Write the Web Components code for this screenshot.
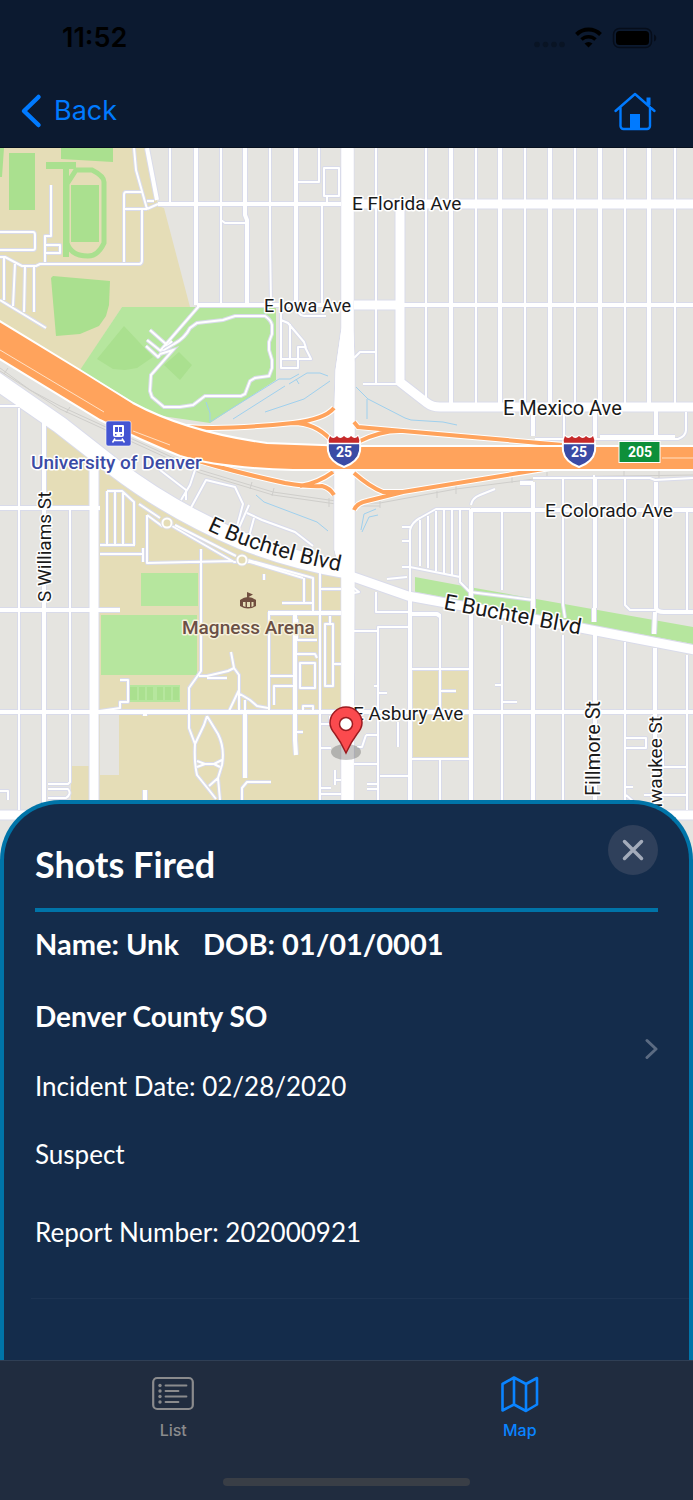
<!DOCTYPE html>
<html lang="en">
<head>
<meta charset="utf-8">
<meta name="viewport" content="width=device-width, initial-scale=1">
<title>Shots Fired</title>
<style>
  body {
    margin: 0;
    font-family: Lato, "Open Sans", sans-serif;
    background: #0c1a30;
  }
</style>
</head>
<body>
<mobile-screen>
  <status-bar slot="top" time="11:52"></status-bar>
  <nav-bar slot="top">Back</nav-bar>
  <street-map slot="map"></street-map>
  <incident-sheet>
    <span slot="title">Shots Fired</span>
    <incident-record>
      <span slot="name">Name: Unk</span>
      <span slot="dob">DOB: 01/01/0001</span>
      <span slot="agency">Denver County SO</span>
      <span slot="date">Incident Date: 02/28/2020</span>
      <span slot="role">Suspect</span>
      <span slot="report">Report Number: 202000921</span>
    </incident-record>
  </incident-sheet>
  <tab-bar slot="tabs">
    <tab-item href="#list">
      <svg slot="icon" width="42" height="38" viewBox="0 0 42 38" fill="none" stroke="currentColor" stroke-width="2.2">
        <rect x="1.2" y="3" width="39.6" height="31" rx="4"/>
        <path d="M13.5 10.5h21M13.5 16h13M13.5 21.5h21M13.5 27h13" stroke-linecap="round" stroke-width="1.8"/>
        <g fill="currentColor" stroke="none"><circle cx="8" cy="10.5" r="1.7"/><circle cx="8" cy="16" r="1.7"/><circle cx="8" cy="21.5" r="1.7"/><circle cx="8" cy="27" r="1.7"/></g>
      </svg>
      List
    </tab-item>
    <tab-item href="#map" active>
      <svg slot="icon" width="38" height="38" viewBox="0 0 38 38" fill="none" stroke="currentColor" stroke-width="2.6" stroke-linejoin="round">
        <path d="M1.500 9L13 2.500L25 9L36 3V29.500L25 36L13 29.500L1.500 35.500ZM13 2.500V29.500M25 9V36"/>
      </svg>
      Map
    </tab-item>
  </tab-bar>
</mobile-screen>

<script>
class MobileScreen extends HTMLElement {
  constructor() {
    super();
    this.attachShadow({ mode: 'open' });
    this.shadowRoot.innerHTML = `
      <style>
        :host {
          display: flex;
          flex-direction: column;
          min-height: 100vh;
        }
        header {
          background: #0c1a30;
          border-bottom: 1px solid #07101f;
        }
        main {
          flex: 1;
          display: flex;
          flex-direction: column;
        }
        ::slotted(incident-sheet) {
          flex: 1;
          margin-top: -60px;
          position: relative;
        }
      </style>
      <header><slot name="top"></slot></header>
      <main><slot name="map"></slot><slot></slot></main>
      <slot name="tabs"></slot>
    `;
  }
}

class StatusBar extends HTMLElement {
  constructor() {
    super();
    this.attachShadow({ mode: 'open' });
    this.shadowRoot.innerHTML = `
      <style>
        :host {
          display: flex;
          align-items: center;
          justify-content: space-between;
          height: 75px;
          padding: 0 36px 0 62px;
          color: #000;
          font: 600 27px/32px Inter, sans-serif;
        }
        svg { display: block; }
      </style>
      <time>${this.getAttribute('time')}</time>
      <svg width="124" height="26" viewBox="0 0 124 26" role="img" aria-label="Wi-Fi on, battery full">
        <g fill="#091424"><circle cx="4" cy="19.500" r="2.800"/><circle cx="12.500" cy="19.500" r="2.800"/><circle cx="21" cy="19.500" r="2.800"/><circle cx="29" cy="19.500" r="2.800"/></g>
        <g fill="none" stroke="#000" stroke-width="4">
          <path d="M43.500 9.500a17 17 0 0 1 24 0"/>
          <path d="M48.500 14.500a10 10 0 0 1 14 0" stroke-width="3.500"/>
        </g>
        <path d="M55.500 22.500l-4-4a6 6 0 0 1 8 0z"/>
        <rect x="80.500" y="3.500" width="38" height="19" rx="6" fill="none" stroke="#060d1a" stroke-width="1.500"/>
        <rect x="83" y="6" width="33" height="14" rx="3.500"/>
        <path d="M121 9.500c3 1 3 6 0 7z" fill="#060d1a"/>
      </svg>
    `;
  }
}

class NavBar extends HTMLElement {
  constructor() {
    super();
    this.attachShadow({ mode: 'open' });
    this.shadowRoot.innerHTML = `
      <style>
        :host {
          display: flex;
          align-items: center;
          justify-content: space-between;
          height: 72px;
          padding: 0 36px 0 20px;
          color: #007aff;
        }
        button {
          display: flex;
          align-items: center;
          gap: 12px;
          padding: 0;
          border: 0;
          background: none;
          color: inherit;
          font: 400 27px/36px Inter, sans-serif;
          cursor: pointer;
        }
        svg { display: block; }
      </style>
      <button>
        <svg width="22" height="36" viewBox="0 0 22 36" fill="none" stroke="currentColor" stroke-width="4.500" stroke-linecap="round" stroke-linejoin="round"><path d="M18.500 4L4 18L18.500 32"/></svg>
        <slot></slot>
      </button>
      <button aria-label="Home">
        <svg width="44" height="40" viewBox="0 0 44 40" fill="none" stroke="currentColor" stroke-width="2.400" stroke-linecap="round" stroke-linejoin="round">
          <path d="M2.500 20L22 3L41.500 20M7.500 16V35a3 3 0 0 0 3 3H34a3 3 0 0 0 3-3V16"/>
          <path d="M35.500 6.500V14" stroke-width="4" stroke-linecap="butt"/>
          <path d="M17 23H27V38H17Z" fill="currentColor" stroke="none"/>
        </svg>
      </button>
    `;
  }
}

// Roads by class. Each one is drawn twice: casing first, then white on top.
const roads = {
  alley: [
    'M170 148V204M221 148V304M270 148V240L271 304M319 148V182H297M322 205V304M324 168H339V196H324ZM327 196V204',
    'M221 220L225 223H245M134 148L136 170L147 209M123 209H147M158 204L147 209M147 201H154M143 192H126Q124 192 124 195V262M142 209V260Q142 264 139 264H40L36 266H22L5 257H0',
    'M51 185V236H45V262M45 245H60V253H45M0 232H33Q35 232 35 235V248Q35 250 33 250H0M4 258V300M15 264L13 306M25 266L24 312M34 266V312M0 300L46 328',
    'M150 330L167 345M147 340L162 352M146 346L158 357L172 341M281 311V368H298V347H305L311 359H281M281 320L288 323L304 342L306 348M290 324V358M296 305Q298 316 304 316H326M199 306L160 351',
    'M376 148V384M426 148V398M476 148V407M525 148V407M575 148V407M625 148V407M675 148V407M363 384H398M354 358L360 352H375',
    'M564 412V438M686 412V430Q686 436 678 439H535M19 408V810M0 406H20M70 510V782L68 784H48M48 789H68Q72 794 66 798H48',
    'M107 491V545M107 491H122L134 502V545M115 492V545M123 493V545M100 545H135M100 554H143M143 548V562M147 515V563L233 561M147 515L162 526H172L234 562H250L303 578',
    'M139 504L160 518M175 525L236 556M248 560L313 578V611M304 578V602M264 574V580M282 603H312M201 549V671L189 688V712M199 676H207L228 671L234 668L231 652M234 668L239 675V712M207 678H227M239 690L229 711',
    'M187 515L206 480L235 487L243 504L236 530M160 470L186 490V500M195 470L190 485L181 500M249 505L238 530M247 513L262 520L295 532L313 546M254 518L248 540',
    'M320 572V800M320 589H341M297 619V640H317M297 654H315L317 658M300 663H315V688H300ZM325 624H333V686H325ZM333 664H341M269 612V712M270 676H293M274 705V686H293M303 712V706H313V712M330 616V624',
    'M120 680H128V702H120V708L100 711M189 713V728L195 744Q194 762 197 775L209 790L216 799M207 716L204 725L195 744M207 716L218 734Q225 748 222 765L218 778L220 800M197 761L205 764H214L222 760M197 767L205 764M214 764L220 767M209 786L218 778M240 694L250 700L257 706L268 708M245 700V711M246 736H247M271 782H247L242 788V800M296 732H303M320 748H331M335 770V780H341M335 776V785M320 788H331M320 794H341M320 724H330V716',
    'M410 530V600M410 530Q412 522 420 518L436 509H470M420 520V566M428 516V568M436 511V571M444 509V573M452 509V576M460 509V577M402 527H410M402 541H410M402 567H410L460 577V582L470 592L533 600M471 505Q472 498 480 495L495 489M387 579L407 577',
    'M502 512V590M502 625V810M563 478V605L565 618M563 635V810M625 478V605L630 610H655M625 642V810M687 512V610M687 655V810M533 478H650L655 480L693 478M594 475V478',
    'M376 592V612H408M354 631H378M378 810V627H408M374 686H378M378 693H387M410 669H469M440 614V712M410 759H469M440 759V810M441 691H456M495 685H501M502 702H517M354 764H378M380 776H408M366 735L362 747H357M366 735H378M398 722V747M367 784H378M367 789H378M625 738H646V748H626M626 787H633M663 751V767H686M644 795H686M626 795L634 802',
    'M354 593L350 585L359 592ZM0 791H8V800'
  ],
  street: [
    'M158 204H341M197 305H345M403 305H693M147 148L157 200M196 148V305M245 148V215L247 220V305M296 148V305',
    'M451 148V407M500 148V407M550 148V407M600 148V407M649 148V407M533 410V436M595 410V438M656 410V439M675 437H600',
    'M44 420V810M0 508H75M75 508H100M0 610H120M0 712H693M268 613H341M295 613V740L296 755M245 713V778M145 712V716M145 790V800M94 508H100',
    'M471 509V810M471 510H693M533 482V810M520 483H533M595 478V608M594 608V622M595 635V810M656 482V608Q657 612 664 612H693M655 612L654 634M655 648V810M410 600V810M412 614H437L440 616'
  ],
  avenue: [
    'M354 204H693M354 305H400M400 204V382L427 403Q432 407 440 407H693M94 445V812M0 815H693',
    'M345 574L408 596L560 624L700 651'
  ],
  boulevard: [
    'M-5 380L60 425L115 468Q170 510 240 540Q290 560 347 570'
  ]
};
const widths = { alley: 2, street: 4, avenue: 9, boulevard: 17 };

const drawRoads = (extra, color) => Object.keys(roads).map(kind =>
  `<path d="${roads[kind].join('')}" stroke="${color}" stroke-width="${widths[kind] + extra}"/>`
).join('');

const ramps = 'M187 427Q225 430 293 423Q325 419 334 408M293 423Q315 423 330 439' +
  'M180 455Q225 470 285 483Q310 487 322 486Q330 488 334 495M300 486Q318 483 333 472' +
  'M354 422L358 427L403 431L563 445M360 441Q382 430 403 431M354 473Q370 487 383 492H403L556 467M354 510Q357 503 367 501L403 492';

const shield = x => `
  <g transform="translate(${x} 451)">
    <path d="M-14 -15Q-11 -12 -7 -15Q-4 -12 0 -15Q4 -12 7 -15Q11 -12 14 -15Q17 -10 16 0Q14 11 0 16Q-14 11 -16 0Q-17 -10 -14 -15Z" fill="#3b4ba5" stroke="#fff" stroke-width="2"/>
    <path d="M-14 -15Q-11 -11 -7 -15Q-4 -11 0 -15Q4 -11 7 -15Q11 -11 14 -15Q16 -11 15 -8H-15Q-16 -11 -14 -15Z" fill="#c62a2a"/>
    <path d="M-15 -7.500H15" stroke="#fff" stroke-width="1.500"/>
    <text class="sign" y="6">25</text>
  </g>`;

class StreetMap extends HTMLElement {
  constructor() {
    super();
    this.attachShadow({ mode: 'open' });
    this.shadowRoot.innerHTML = `
      <style>
        :host { display: block; }
        svg {
          display: block;
          width: 100%;
          aspect-ratio: 693 / 712;
        }
        text {
          font-family: Roboto, "Noto Sans", sans-serif;
          font-size: 19px;
          fill: #1a1a1a;
          stroke: #fff;
          stroke-width: 3px;
          stroke-linejoin: round;
          paint-order: stroke;
        }
        .small { font-size: 18px; }
        .large { font-size: 20px; }
        .arterial { font-size: 22px; }
        .station { font-weight: 500; fill: #3b4ba5; }
        .place { font-weight: 500; fill: #6b5045; stroke: #f6f1dc; }
        .sign {
          font-size: 14px;
          font-weight: 700;
          fill: #fff;
          stroke: none;
          text-anchor: middle;
        }
      </style>
      <svg viewBox="0 148 693 712" preserveAspectRatio="xMidYMid slice">
        <rect y="148" width="693" height="712" fill="#e5e4e0"/>

        <g fill="#e5ddb7">
          <path d="M0 148H147L158 206L164 208L190 307H122L80 371L0 322Z"/>
          <path d="M47 420L89 450V506H47ZM71 766H89V810H71Z"/>
          <path d="M98 465L341 577V712H319V810H98Z"/>
          <path d="M412 669H469V758H412Z"/>
        </g>
        <path d="M100 715H119V775H100Z" fill="#e5e4e0"/>
        <g fill="#b6e69e">
          <path d="M122 307H276V380L210 423L155 415L80 370Z"/>
          <path d="M141 573H198V606H141ZM101 615H197V675H101ZM129 685H180V702H129Z"/>
          <path d="M415 577L458 585L693 627V644L415 592Z"/>
        </g>
        <g fill="#aae08f">
          <path d="M0 148H4L2 177H0ZM9 153H35V210H9ZM61 148H113V162L61 159ZM46 162H76V169H46ZM63 165H69V257H63ZM71 185H99V242H71Z"/>
          <path d="M51 278L53 276L110 281L109 305L106 316L99 326L80 334L56 336Z"/>
          <path d="M124 326L153 357L137 368L125 370L113 369L97 359ZM179 352L192 365L180 380L164 365Z"/>
          <path d="M130 687h7v13h-7zM139 687h6v13h-6zM147 687h6v13h-6zM157 687h6v13h-6zM165 687h6v13h-6zM173 687h6v13h-6z"/>
        </g>
        <path d="M67 242V184L76 170H92Q104 176 104 182V243Q98 256 88 256Q71 256 67 243Z" fill="none" stroke="#aae08f" stroke-width="5"/>

        <g fill="none">
          <path d="M0 368L30 390L60 406L130 438L200 470L273 492L350 503L380 503L456 489L550 477L693 475M0 371L60 409L130 441L200 473L273 495L350 506L380 506" stroke="#cfcecb"/>
          <path d="M4 374L8 368M66 413L70 407M250 489L252 482M272 496L274 488M329 507V498M380 508V500M437 498V491M456 494V486M512 483V475M547 480V472M624 478V469M659 478V470" stroke="#cfcecb"/>
          <path d="M210 422L279 379H290L299 374M233 419L285 386M289 384L307 373H320L328 376M265 412L304 399L330 381M299 384L296 379M206 402L210 413V422M256 495L264 502L317 522L328 531M356 387L368 399L405 418L411 420L443 422L457 425M367 399V419M376 509L364 514L361 530M378 515L369 517L362 532" stroke="#9fd0ee"/>
          <g stroke-linejoin="round" stroke-linecap="butt">
            ${drawRoads(2, '#d9dbea')}
            <path d="M341 148H354V330L355 362V548L355 565L354 810H341V577L334 550V406L335 370L341 328Z" fill="#fff" stroke="#d9dbea"/>
            ${drawRoads(0, '#fff')}
            <path d="M341.500 148H353.500V330L354.500 362V565L353.500 810H341.500V577L334.500 550V406L335.500 370L341.500 328Z" fill="#fff"/>
          </g>
          <path d="M164 350L174 344Q185 338 190 328L197 323L223 320L235 316H265Q271 320 272 325V334L269 342V350L272 360V368L269 376L255 378L250 381L245 394L241 396H205L193 405L180 407H164L152 397L150 391L151 375L173 350L160 354" stroke="#d9dbea" stroke-width="4"/>
          <path d="M164 350L174 344Q185 338 190 328L197 323L223 320L235 316H265Q271 320 272 325V334L269 342V350L272 360V368L269 376L255 378L250 381L245 394L241 396H205L193 405L180 407H164L152 397L150 391L151 375L173 350L160 354" stroke="#fff" stroke-width="2"/>
          <g fill="#e5ddb7" stroke="#d9dbea"><circle cx="167" cy="523" r="6"/><circle cx="242" cy="560" r="6"/></g>
          <g stroke="#fff" stroke-width="2"><circle cx="167" cy="523" r="4.500"/><circle cx="242" cy="560" r="4.500"/></g>

          <path d="${ramps}" stroke="#fff" stroke-width="6"/>
          <path d="${ramps}" stroke="#ffa35c" stroke-width="4"/>
          <path d="M-2 320L80 370L133 403Q187 432 267 443L350 446H695V470H293Q220 468 180 456Q140 440 100 420L-2 358Z" fill="#ffa35c" stroke="#fff" stroke-width="2"/>
          <path d="M0 350L104 412M133 431L170 445M662 458H693" stroke="#ffe0c4"/>
        </g>

        <text x="352" y="210">E Florida Ave</text>
        <text class="small" x="264" y="312">E Iowa Ave</text>
        <text class="large" x="503" y="415">E Mexico Ave</text>
        <text x="545" y="517">E Colorado Ave</text>
        <text x="353" y="720">E Asbury Ave</text>
        <text transform="translate(51 602) rotate(-90)">S Williams St</text>
        <text class="large" transform="translate(600 796) rotate(-90)">Fillmore St</text>
        <text transform="translate(662 716) rotate(-90)" text-anchor="end">Milwaukee St</text>
        <path id="west" d="M207 530Q265 558 360 575" fill="none"/>
        <path id="east" d="M443 609L610 640" fill="none"/>
        <text class="arterial"><textPath href="#west">E Buchtel Blvd</textPath></text>
        <text class="arterial"><textPath href="#east">E Buchtel Blvd</textPath></text>
        <text class="station" x="31" y="469">University of Denver</text>
        <text class="place" x="182" y="634">Magness Arena</text>

        <g transform="translate(106 421)">
          <rect width="25" height="25" rx="2" fill="#4455d2" stroke="#fff" stroke-opacity=".6"/>
          <path d="M8 4H17Q18 4 18 5V14Q18 16 16 16H9Q7 16 7 14V5Q7 4 8 4Z" fill="#fff"/>
          <path d="M9 6H12V11H9ZM13 6H16V11H13ZM9 13h1.500v1.500h-1.500zM14.500 13h1.500v1.500h-1.500z" fill="#4455d2"/>
          <path d="M9 17.500L6.500 21.500M16 17.500L18.500 21.500M8 19.500H17" stroke="#fff" stroke-width="1.500"/>
        </g>
        <g fill="#704e3f">
          <path d="M247 592L253 594.500L248.500 597V599H247Z"/>
          <path fill-rule="evenodd" d="M240 600Q248 594 256 600V606Q248 611 240 606ZM243 602V606L245.500 607V602ZM247 602V607H250V602ZM251.500 602V607L253.500 606V602Z"/>
        </g>
        ${shield(344)}
        ${shield(579)}
        <rect x="619" y="441.500" width="41" height="21" fill="#0e8f3a" stroke="#fff"/>
        <text class="sign" x="640" y="457">205</text>

        <ellipse cx="346" cy="752" rx="15" ry="8" fill="#000" fill-opacity=".22"/>
        <path d="M346 753Q341 742 335 734Q330 728 330 723A16 16 0 0 1 362 723Q362 728 357 734Q351 742 346 753Z" fill="#fb4a4e" stroke="#9b1b20" stroke-width="1.500"/>
        <circle cx="346" cy="724" r="6.500" fill="#fff" stroke="#9b1b20" stroke-width="1.500"/>
      </svg>
    `;
  }
}

class IncidentSheet extends HTMLElement {
  constructor() {
    super();
    this.attachShadow({ mode: 'open' });
    this.shadowRoot.innerHTML = `
      <style>
        :host {
          display: block;
          box-sizing: border-box;
          border: 4px solid #0074a8;
          border-bottom: 0;
          border-radius: 60px 60px 0 0;
          background: #142c4b;
          color: #fff;
        }
        header {
          display: flex;
          justify-content: space-between;
          margin: 0 31px;
          padding: 21px 0 24px;
          border-bottom: 4px solid #0074a8;
        }
        h1 {
          margin: 19px 0 0;
          font-size: 36px;
          font-weight: 700;
          line-height: 40px;
        }
        button {
          display: grid;
          place-items: center;
          width: 50px;
          height: 50px;
          padding: 0;
          border: 0;
          border-radius: 50%;
          background: #2f405b;
          color: #a3abba;
          cursor: pointer;
        }
      </style>
      <header>
        <h1><slot name="title"></slot></h1>
        <button aria-label="Close">
          <svg width="22" height="22" viewBox="0 0 22 22" fill="none" stroke="currentColor" stroke-width="3.500" stroke-linecap="round"><path d="M2.500 2.500L19.500 19.500M19.500 2.500L2.500 19.500"/></svg>
        </button>
      </header>
      <slot></slot>
    `;
  }
}

class IncidentRecord extends HTMLElement {
  constructor() {
    super();
    this.attachShadow({ mode: 'open' });
    this.shadowRoot.innerHTML = `
      <style>
        :host {
          display: grid;
          grid-template-columns: 1fr auto;
          margin-left: 27px;
          padding: 14px 31px 48px 4px;
          border-bottom: 1px solid #1c3352;
          font-size: 26px;
          line-height: 36px;
        }
        p { margin: 0; }
        .summary {
          display: flex;
          flex-direction: column;
          gap: 32px;
        }
        .person {
          display: flex;
          gap: 24px;
          margin-bottom: 4px;
          font-size: 29px;
          font-weight: 700;
        }
        .agency {
          margin-bottom: 2px;
          font-size: 28px;
          font-weight: 700;
        }
        .report { margin-top: 42px; }
        a {
          align-self: center;
          color: #5b6b82;
        }
        svg { display: block; }
      </style>
      <div class="summary">
        <p class="person"><slot name="name"></slot><slot name="dob"></slot></p>
        <p class="agency"><slot name="agency"></slot></p>
        <p><slot name="date"></slot></p>
        <p><slot name="role"></slot></p>
      </div>
      <a href="#report" aria-label="Open report">
        <svg width="13" height="22" viewBox="0 0 13 22" fill="none" stroke="currentColor" stroke-width="3" stroke-linecap="round" stroke-linejoin="round"><path d="M2 2.500L11 11L2 19.500"/></svg>
      </a>
      <p class="report"><slot name="report"></slot></p>
    `;
  }
}

class TabBar extends HTMLElement {
  constructor() {
    super();
    this.attachShadow({ mode: 'open' });
    this.shadowRoot.innerHTML = `
      <style>
        :host {
          display: block;
          padding-bottom: 14px;
          border-top: 1px solid #2f3f55;
          background: #202c3f;
        }
        nav {
          display: flex;
          height: 117px;
        }
        ::slotted(tab-item) { flex: 1; }
        .indicator {
          width: 247px;
          height: 8px;
          margin: 0 auto;
          border-radius: 4px;
          background: #393e46;
        }
      </style>
      <nav><slot></slot></nav>
      <div class="indicator"></div>
    `;
  }
}

class TabItem extends HTMLElement {
  constructor() {
    super();
    this.attachShadow({ mode: 'open' });
    this.shadowRoot.innerHTML = `
      <style>
        :host {
          display: block;
          color: #8a8b8d;
        }
        :host([active]) { color: #0a84ff; }
        a {
          display: flex;
          flex-direction: column;
          align-items: center;
          gap: 5px;
          padding-top: 14px;
          color: inherit;
          font: 500 16px/24px Inter, sans-serif;
          text-decoration: none;
        }
      </style>
      <a href="${this.getAttribute('href')}"><slot name="icon"></slot><span><slot></slot></span></a>
    `;
  }
}

customElements.define('mobile-screen', MobileScreen);
customElements.define('status-bar', StatusBar);
customElements.define('nav-bar', NavBar);
customElements.define('street-map', StreetMap);
customElements.define('incident-sheet', IncidentSheet);
customElements.define('incident-record', IncidentRecord);
customElements.define('tab-bar', TabBar);
customElements.define('tab-item', TabItem);
</script>
</body>
</html>
